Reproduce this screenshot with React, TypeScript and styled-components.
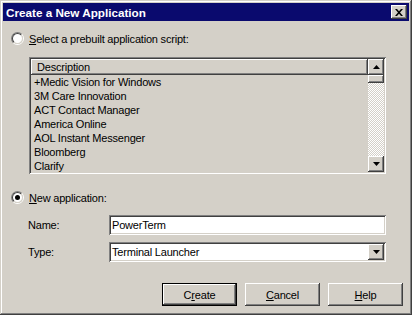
import React from "react";
import styled, { createGlobalStyle, css } from "styled-components";

const face = "#d4d0c8";
const shadow = "#808080";
const dark = "#404040";

const GlobalStyle = createGlobalStyle`
  html, body {
    margin: 0;
    padding: 0;
    background: ${face};
  }
  body {
    font-family: "Liberation Sans", Arial, sans-serif;
    font-size: 11px;
    letter-spacing: -0.2px;
    color: #000;
  }
`;

const raised = css`
  background: ${face};
  box-shadow: inset -1px -1px ${dark}, inset 1px 1px #fff,
    inset -2px -2px ${shadow}, inset 2px 2px ${face};
`;

const sunken = css`
  box-shadow: inset 1px 1px ${shadow}, inset -1px -1px #fff,
    inset 2px 2px ${dark}, inset -2px -2px ${face};
`;

const Window = styled.div`
  width: 412px;
  height: 315px;
  box-sizing: border-box;
  padding: 3px;
  background: ${face};
  box-shadow: inset -1px -1px ${dark}, inset 1px 1px ${face},
    inset -2px -2px ${shadow}, inset 2px 2px #fff;
  display: flex;
  flex-direction: column;
`;

const TitleBar = styled.div`
  height: 18px;
  background: #0a0a6e;
  display: flex;
  align-items: center;
  justify-content: space-between;
  padding: 0 2px 0 3px;
`;

const TitleText = styled.span`
  color: #fff;
  font-weight: bold;
  font-size: 11.7px;
  letter-spacing: 0;
`;

const CloseButton = styled.div`
  ${raised};
  width: 16px;
  height: 14px;
  display: flex;
  align-items: center;
  justify-content: center;
`;

const Body = styled.div`
  display: flex;
  flex-direction: column;
  padding: 0 6px 0 8px;
`;

const RadioRow = styled.label<{ $top: number }>`
  display: flex;
  align-items: center;
  gap: 5px;
  height: 13px;
  margin-top: ${(p) => p.$top}px;
`;

const RadioCircle = styled.span<{ $checked?: boolean }>`
  position: relative;
  width: 13px;
  height: 13px;
  box-sizing: border-box;
  border-radius: 50%;
  border: 1px solid;
  border-color: ${shadow} #fff #fff ${shadow};
  &::before {
    content: "";
    position: absolute;
    inset: 0;
    border-radius: 50%;
    border: 1px solid;
    border-color: ${dark} ${face} ${face} ${dark};
    background: #fff;
  }
  &::after {
    content: "";
    display: ${(p) => (p.$checked ? "block" : "none")};
    position: absolute;
    left: 3px;
    top: 3px;
    width: 5px;
    height: 5px;
    border-radius: 50%;
    background: #000;
  }
`;

const Key = styled.span`
  text-decoration: underline;
`;

const ListBox = styled.div`
  ${sunken};
  margin: 12px 17px 0 18px;
  height: 117px;
  box-sizing: border-box;
  padding: 2px;
  display: flex;
`;

const ListContent = styled.div`
  flex: 1;
  display: flex;
  flex-direction: column;
  overflow: hidden;
`;

const ListHeader = styled.div`
  ${raised};
  height: 16px;
  flex: none;
  line-height: 16px;
  padding-left: 6px;
`;

const ListRow = styled.div`
  height: 14px;
  flex: none;
  line-height: 15px;
  padding-left: 3px;
  white-space: nowrap;
`;

const ScrollBar = styled.div`
  width: 16px;
  display: flex;
  flex-direction: column;
`;

const ScrollButton = styled.div<{ $h?: number }>`
  ${raised};
  height: ${(p) => p.$h ?? 16}px;
  flex: none;
  display: flex;
  align-items: center;
  justify-content: center;
`;

const ScrollTrack = styled.div`
  flex: 1;
  background: repeating-conic-gradient(#fff 0% 25%, ${face} 0% 50%) 0 0 / 2px
    2px;
`;

const FieldRow = styled.div<{ $top: number }>`
  display: flex;
  align-items: center;
  margin: ${(p) => p.$top}px 17px 0 17px;
`;

const FieldLabel = styled.span`
  width: 81px;
  flex: none;
`;

const TextBox = styled.div`
  ${sunken};
  flex: 1;
  height: 20px;
  box-sizing: border-box;
  background: #fff;
  line-height: 20px;
  padding-left: 3px;
  display: flex;
  justify-content: space-between;
`;

const ComboButton = styled.div`
  ${raised};
  width: 16px;
  height: 16px;
  margin: 2px;
  display: flex;
  align-items: center;
  justify-content: center;
`;

const ButtonRow = styled.div`
  display: flex;
  justify-content: flex-end;
  gap: 8px;
  margin-top: 21px;
`;

const PushButton = styled.div<{ $default?: boolean }>`
  ${raised};
  width: 75px;
  height: 23px;
  box-sizing: border-box;
  display: flex;
  align-items: center;
  justify-content: center;
  ${(p) =>
    p.$default &&
    css`
      box-shadow: inset 0 0 0 1px #000, inset -2px -2px ${dark},
        inset 2px 2px #fff, inset -3px -3px ${shadow};
    `}
`;

const Arrow = ({ up }: { up?: boolean }) => (
  <svg width="7" height="4" viewBox="0 0 7 4">
    <polygon
      points={up ? "3.5,0 7,4 0,4" : "0,0 7,0 3.5,4"}
      fill="#000"
    />
  </svg>
);

const items = [
  "+Medic Vision for Windows",
  "3M Care Innovation",
  "ACT Contact Manager",
  "America Online",
  "AOL Instant Messenger",
  "Bloomberg",
  "Clarify",
];

export default function App() {
  return (
    <>
      <GlobalStyle />
      <Window>
        <TitleBar>
          <TitleText>Create a New Application</TitleText>
          <CloseButton>
            <svg width="8" height="7" viewBox="0 0 8 7">
              <path
                d="M0 0h2l2 2.3L6 0h2L5 3.5 8 7H6L4 4.7 2 7H0l3-3.5z"
                fill="#000"
              />
            </svg>
          </CloseButton>
        </TitleBar>
        <Body>
          <RadioRow $top={11}>
            <RadioCircle />
            <span>
              <Key>S</Key>elect a prebuilt application script:
            </span>
          </RadioRow>
          <ListBox>
            <ListContent>
              <ListHeader>Description</ListHeader>
              {items.map((it) => (
                <ListRow key={it}>{it}</ListRow>
              ))}
            </ListContent>
            <ScrollBar>
              <ScrollButton>
                <Arrow up />
              </ScrollButton>
              <ScrollButton $h={8} />
              <ScrollTrack />
              <ScrollButton>
                <Arrow />
              </ScrollButton>
            </ScrollBar>
          </ListBox>
          <RadioRow $top={17}>
            <RadioCircle $checked />
            <span>
              <Key>N</Key>ew application:
            </span>
          </RadioRow>
          <FieldRow $top={11}>
            <FieldLabel>Name:</FieldLabel>
            <TextBox>PowerTerm</TextBox>
          </FieldRow>
          <FieldRow $top={7}>
            <FieldLabel>Type:</FieldLabel>
            <TextBox>
              Terminal Launcher
              <ComboButton>
                <Arrow />
              </ComboButton>
            </TextBox>
          </FieldRow>
          <ButtonRow>
            <PushButton $default>
              <span>
                C<Key>r</Key>eate
              </span>
            </PushButton>
            <PushButton>
              <span>
                <Key>C</Key>ancel
              </span>
            </PushButton>
            <PushButton>
              <span>
                <Key>H</Key>elp
              </span>
            </PushButton>
          </ButtonRow>
        </Body>
      </Window>
    </>
  );
}
